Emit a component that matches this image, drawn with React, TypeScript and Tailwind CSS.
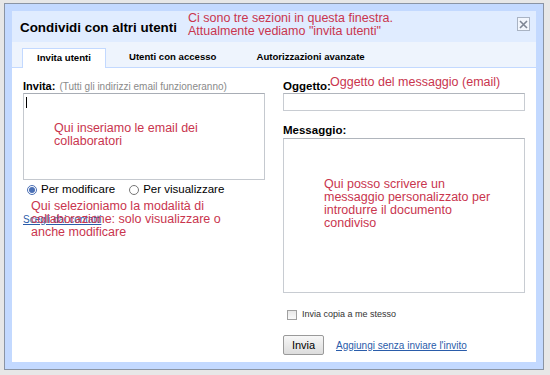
const red = 'text-[#c9354e]';

const Annotation = ({ className, children }: { className: string; children: React.ReactNode }) => (
  <div className={`absolute whitespace-nowrap text-[12.5px] leading-[13px] ${red} ${className}`}>{children}</div>
);

const CloseButton = () => (
  <div className="mr-[6px] mt-[6px] flex h-[14px] w-[13px] items-center justify-center self-start border border-[#a9b3c3] bg-[#f2f6fd]">
    <svg width="9" height="9" viewBox="0 0 9 9">
      <path d="M1 1 L8 8 M8 1 L1 8" stroke="#7d8594" strokeWidth="1.6" />
    </svg>
  </div>
);

const App = () => {
  return (
    <div className="h-[375px] w-[550px] bg-[#e7e7e7] pl-[4px] pt-[3px] font-['Liberation_Sans',Arial,sans-serif] text-black">
      <div className="h-[367px] w-[540px] border border-[#8a94a4] bg-[#c3d9ff] p-[7px]">
        <div className="flex h-full flex-col bg-white">
          {/* header */}
          <div className="relative flex h-[31px] items-center bg-[#e0ecff] pl-[8px]">
            <h1 className="pt-[3px] text-[13.4px] font-bold leading-none">Condividi con altri utenti</h1>
            <Annotation className="left-[176px] top-[1px] leading-[12px]">
              Ci sono tre sezioni in questa finestra.
              <br />
              Attualmente vediamo "invita utenti"
            </Annotation>
            <div className="ml-auto" />
            <CloseButton />
          </div>

          {/* tabs */}
          <div className="flex h-[26px] items-end border-b border-[#c3d9ff] bg-[#eef4fd] pl-[10px] text-[9.6px] font-bold">
            <div className="-mb-px flex h-[20px] w-[84px] items-center justify-center border border-b-0 border-[#c3d9ff] bg-white">
              Invita utenti
            </div>
            <div className="ml-[23px] flex h-[20px] items-center">Utenti con accesso</div>
            <div className="ml-[40px] flex h-[20px] items-center">Autorizzazioni avanzate</div>
          </div>

          {/* body */}
          <div className="flex gap-[18px] pl-[11px] pr-[10px] pt-[12px]">
            <div className="w-[242px]">
              <div className="flex h-[13px] items-center whitespace-nowrap">
                <span className="text-[11px] font-bold">Invita:</span>
                <span className="ml-[4px] text-[10px] text-[#8a8a8a]">(Tutti gli indirizzi email funzioneranno)</span>
              </div>
              <div className="relative h-[87px] border border-[#c5c9cf] border-t-[#a8adb5]">
                <div className="absolute left-[2px] top-[3px] h-[11px] w-px bg-black" />
                <Annotation className="left-[30px] top-[28px]">
                  Qui inseriamo le email dei
                  <br />
                  collaboratori
                </Annotation>
              </div>
              <div className="mt-[3px] flex h-[14px] items-center text-[11.5px]">
                <input type="radio" defaultChecked name="mode" className="ml-[4px] h-[10px] w-[10px] accent-[#4a6fb5]" />
                <span className="ml-[4px]">Per modificare</span>
                <input type="radio" name="mode" className="ml-[14px] h-[10px] w-[10px]" />
                <span className="ml-[4px]">Per visualizzare</span>
              </div>
              <div className="relative mt-[9px] h-[13px]">
                <span className="text-[10px] leading-[13px] text-[#2a5caa] underline">Scegli dai contatti</span>
                <Annotation className="left-[8px] top-[-6px] leading-[13.5px]">
                  Qui selezioniamo la modalità di
                  <br />
                  collaborazione: solo visualizzare o
                  <br />
                  anche modificare
                </Annotation>
              </div>
            </div>

            <div className="w-[242px]">
              <div className="relative flex h-[13px] items-center">
                <span className="text-[11.5px] font-bold">Oggetto:</span>
                <Annotation className="left-[47px] top-[-4px]">Oggetto del messaggio (email)</Annotation>
              </div>
              <div className="h-[18px] border border-[#c8ccd2] border-t-[#b0b5bc]" />
              <div className="mt-[13px] flex h-[14px] items-center text-[11.5px] font-bold">Messaggio:</div>
              <div className="relative h-[155px] border border-[#c8ccd2] border-t-[#b0b5bc]">
                <Annotation className="left-[40px] top-[39px]">
                  Qui posso scrivere un
                  <br />
                  messaggio personalizzato per
                  <br />
                  introdurre il documento
                  <br />
                  condiviso
                </Annotation>
              </div>
              <div className="mt-[15px] flex h-[14px] items-center text-[9px] text-[#333]">
                <span className="ml-[4px] h-[10px] w-[10px] border border-[#a0a0a0] bg-gradient-to-b from-[#e8e8e8] to-[#fafafa]" />
                <span className="ml-[5px]">Invia copia a me stesso</span>
              </div>
              <div className="mt-[13px] flex items-center">
                <button className="h-[20px] w-[41px] rounded-[2px] border border-[#9a9a9a] bg-gradient-to-b from-[#f7f7f7] to-[#dcdcdc] text-[11px] leading-none">
                  Invia
                </button>
                <span className="ml-[12px] text-[10px] text-[#2a5caa] underline">Aggiungi senza inviare l'invito</span>
              </div>
            </div>
          </div>
        </div>
      </div>
    </div>
  );
};

export default App;
